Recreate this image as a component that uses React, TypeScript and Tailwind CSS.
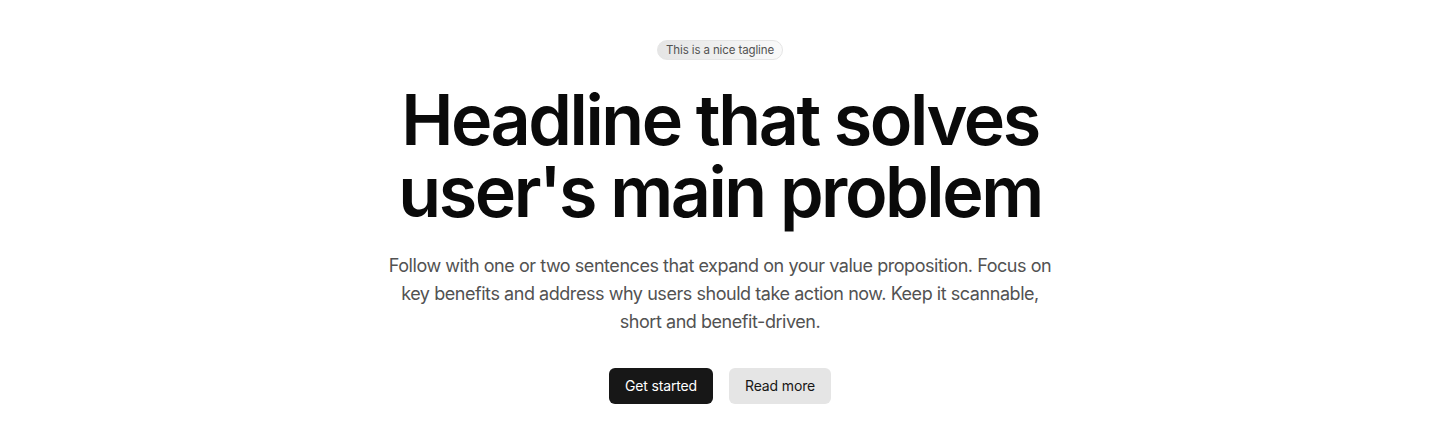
export default function App() {
  return (
    <div className="min-h-screen bg-white" style={{ fontFamily: 'Inter, "Noto Sans", sans-serif' }}>
      <section className="flex flex-col items-center px-6 pt-10 pb-10 text-center">
        <span className="rounded-full border border-neutral-200 bg-gradient-to-r from-neutral-200 to-neutral-50 px-2 py-[2px] text-[11.5px] leading-[14px] tracking-[-0.01em] text-neutral-600">
          This is a nice tagline
        </span>
        <h1 className="mt-6 max-w-4xl text-[70px] leading-[72px] font-semibold tracking-[-0.035em] text-neutral-950">
          Headline that solves
          <br />
          user's main problem
        </h1>
        <p className="mt-6 max-w-[680px] text-lg leading-7 tracking-[-0.025em] text-neutral-600">
          Follow with one or two sentences that expand on your value proposition. Focus on key benefits and address why users should take action now. Keep it scannable, short and benefit-driven.
        </p>
        <div className="mt-8 flex gap-4">
          <button className="h-9 rounded-md bg-neutral-900 px-4 text-sm tracking-[-0.01em] text-white">Get started</button>
          <button className="h-9 rounded-md bg-neutral-200 px-4 text-sm tracking-[-0.01em] text-neutral-900">Read more</button>
        </div>
      </section>
    </div>
  );
}
